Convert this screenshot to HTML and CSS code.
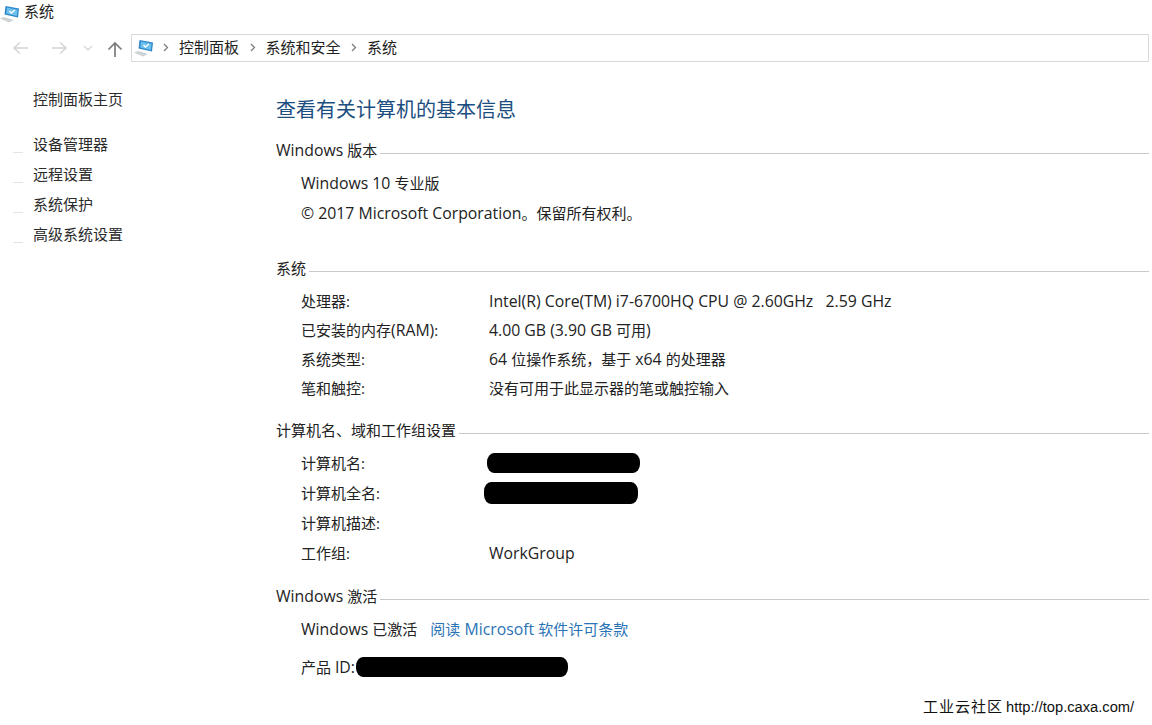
FILE: index.html
```html
<!DOCTYPE html>
<html lang="zh-CN">
<head>
<meta charset="utf-8">
<title>系统</title>
<link rel="stylesheet" href="styles.css">
</head>
<body>
<div class="window">
  <svg width="0" height="0" class="defs">
    <defs>
      <symbol id="pc" viewBox="0 0 20 18">
        <path d="M0 13.500 L4 12 L14 15 L9 17.500 Z" fill="#cfd2d4"/>
        <path d="M5.500 1 L19 3.500 L18 12.500 L4.500 9.500 Z" fill="#2f86c9"/>
        <path d="M7 2.600 L17.600 4.700 L16.800 11 L6.200 8.600 Z" fill="#6cc0ee"/>
        <path d="M9.500 6 L11.300 8 L15 5" fill="none" stroke="#fff" stroke-width="1.300"/>
      </symbol>
    </defs>
  </svg>
  <header class="titlebar">
    <svg class="title-icon"><use href="#pc"/></svg>
    <span>系统</span>
  </header>
  <nav class="navbar">
    <div class="nav-buttons">
      <svg class="nav-back" width="18" height="14" viewBox="0 0 18 14"><path d="M16 7H2M8 1.500 2 7l6 5.500" fill="none" stroke="#d4d4d4" stroke-width="1.500"/></svg>
      <svg class="nav-forward" width="18" height="14" viewBox="0 0 18 14"><path d="M2 7h14M10 1.500 16 7l-6 5.500" fill="none" stroke="#d4d4d4" stroke-width="1.500"/></svg>
      <svg class="nav-down" width="10" height="6" viewBox="0 0 10 6"><path d="M1 1l4 4 4-4" fill="none" stroke="#d4d4d4" stroke-width="1.200"/></svg>
      <svg class="nav-up" width="16" height="16" viewBox="0 0 16 16"><path d="M8 16V2M1.500 8.500 8 2l6.500 6.500" fill="none" stroke="#7b7b7b" stroke-width="1.700"/></svg>
    </div>
    <div class="address">
      <svg class="address-icon"><use href="#pc"/></svg>
      <svg class="crumb-sep" width="6" height="9" viewBox="0 0 6 9"><path d="M1 1l3.500 3.500L1 8" fill="none" stroke="#777" stroke-width="1.200"/></svg>
      <span>控制面板</span>
      <svg class="crumb-sep" width="6" height="9" viewBox="0 0 6 9"><path d="M1 1l3.500 3.500L1 8" fill="none" stroke="#777" stroke-width="1.200"/></svg>
      <span>系统和安全</span>
      <svg class="crumb-sep" width="6" height="9" viewBox="0 0 6 9"><path d="M1 1l3.500 3.500L1 8" fill="none" stroke="#777" stroke-width="1.200"/></svg>
      <span>系统</span>
    </div>
  </nav>
  <div class="main">
    <aside class="sidebar">
      <div class="side-home">控制面板主页</div>
      <ul class="side-links">
        <li>设备管理器</li>
        <li>远程设置</li>
        <li>系统保护</li>
        <li>高级系统设置</li>
      </ul>
    </aside>
    <main class="content">
      <h1 class="page-title">查看有关计算机的基本信息</h1>

      <section class="sec sec-edition">
        <h2 class="sec-head"><span><span class="la">Windows </span>版本</span></h2>
        <div class="plain-rows">
          <div><span class="la">Windows 10 </span>专业版</div>
          <div><span class="la">© 2017 Microsoft Corporation</span>。保留所有权利。</div>
        </div>
      </section>

      <section class="sec sec-system">
        <h2 class="sec-head"><span>系统</span></h2>
        <dl class="rows rows-tight">
          <dt>处理器:</dt><dd><span class="la">Intel(R) Core(TM) i7-6700HQ CPU @ 2.60GHz&nbsp;&nbsp; 2.59 GHz</span></dd>
          <dt>已安装的内存<span class="la">(RAM)</span>:</dt><dd><span class="la">4.00 GB (3.90 GB </span>可用<span class="la">)</span></dd>
          <dt>系统类型:</dt><dd><span class="la">64 </span>位操作系统，基于<span class="la"> x64 </span>的处理器</dd>
          <dt>笔和触控:</dt><dd>没有可用于此显示器的笔或触控输入</dd>
        </dl>
      </section>

      <section class="sec sec-computer">
        <h2 class="sec-head"><span>计算机名、域和工作组设置</span></h2>
        <dl class="rows">
          <dt>计算机名:</dt><dd><span class="redact redact-name"></span></dd>
          <dt>计算机全名:</dt><dd><span class="redact redact-full"></span></dd>
          <dt>计算机描述:</dt><dd></dd>
          <dt>工作组:</dt><dd><span class="la">WorkGroup</span></dd>
        </dl>
      </section>

      <section class="sec sec-activation">
        <h2 class="sec-head"><span><span class="la">Windows </span>激活</span></h2>
        <div class="activated"><span class="la">Windows </span>已激活<a class="license">阅读<span class="la"> Microsoft </span>软件许可条款</a></div>
        <div class="product">产品&nbsp;<span class="la">ID:</span><span class="redact redact-id"></span></div>
      </section>
    </main>
  </div>
  <div class="watermark"><span class="wm-cn">工业云社区</span><span class="wm-url">http://top.caxa.com/</span></div>
</div>
</body>
</html>
```

FILE: styles.css
```css
* { box-sizing: border-box; }
html, body { margin: 0; padding: 0; background: #fff; }
body {
  font-family: "Open Sans", "Noto Sans CJK SC", sans-serif;
  font-size: 15px;
  color: #222;
  overflow: hidden;
}
.la { font-size: 15.8px; }
.window { position: relative; width: 1152px; height: 725px; padding-right: 3px; }
.defs { position: absolute; }

.titlebar {
  height: 26px;
  display: flex;
  align-items: center;
  gap: 4px;
  font-size: 15px;
  padding-bottom: 5px;
}
.title-icon { width: 20px; height: 18px; margin-top: 6px; }

.navbar { display: flex; height: 28px; margin-top: 8px; align-items: center; }
.nav-buttons { width: 131px; display: flex; align-items: center; flex: none; }
.nav-back { margin-left: 12px; }
.nav-forward { margin-left: 20px; }
.nav-down { margin-left: 15px; }
.nav-up { margin-left: 14px; margin-top: 2px; }

.address {
  flex: 1;
  height: 28px;
  border: 1px solid #d9d9d9;
  display: flex;
  align-items: center;
  font-size: 15px;
  padding: 0 0 4px 2px;
  color: #1e1e1e;
}
.address-icon { width: 20px; height: 18px; margin-top: 4px; }
.crumb-sep { margin: 2px 10px 0 10.5px; }
.address-icon + .crumb-sep { margin-left: 9px; }

.main { display: flex; }
.sidebar { width: 276px; flex: none; padding: 25px 0 0 33px; color: #2b2b2b; }
.side-home { line-height: 24px; }
.side-links { list-style: none; margin: 21px 0 0; padding: 0; }
.side-links li { height: 30px; line-height: 24px; position: relative; }
.side-links li::before {
  content: "";
  position: absolute;
  left: -20px;
  top: 20px;
  width: 10px;
  height: 1px;
  background: #e4e4e4;
}

.content { flex: 1; min-width: 0; }
.page-title {
  margin: 33px 0 0;
  font-size: 20px;
  font-weight: 400;
  line-height: 30px;
  color: #1c4e80;
}
.sec-head {
  display: flex;
  align-items: center;
  margin: 0;
  font-size: 15px;
  font-weight: 400;
  line-height: 22px;
  color: #222;
}
.sec-head::after {
  content: "";
  flex: 1;
  height: 1px;
  margin: 7px 0 0 3px;
  background: #c9c9c9;
}
.sec-edition { margin-top: 14px; }
.sec-system { margin-top: 26px; }
.sec-computer { margin-top: 14px; }
.sec-activation { margin-top: 14px; }

.plain-rows { padding: 10px 0 0 25px; }
.plain-rows div { height: 30px; line-height: 24px; }

.rows {
  display: grid;
  grid-template-columns: 188px 1fr;
  margin: 0;
  padding: 10px 0 0 25px;
  grid-auto-rows: 30px;
  line-height: 24px;
}
.rows-tight { grid-auto-rows: 29px; }
.rows dt, .rows dd { margin: 0; }

.redact {
  display: block;
  background: #000;
  border-radius: 7px / 9px;
}
.redact-name { width: 153px; height: 20px; margin: 2px 0 0 -2px; }
.redact-full { width: 154px; height: 22px; margin: 1px 0 0 -5px; }

.activated { padding: 10px 0 0 25px; line-height: 24px; }
.license { margin-left: 13px; color: #2a73b5; }
.product { display: flex; align-items: center; padding: 14px 0 0 25px; line-height: 24px; }
.redact-id { width: 212px; height: 20px; margin-left: 1px; }

.watermark {
  position: absolute;
  left: 923px;
  top: 696px;
  display: flex;
  gap: 3px;
  font-family: "Liberation Sans", "Noto Sans CJK SC", sans-serif;
  font-size: 14.7px;
  line-height: 22px;
  color: #111;
  white-space: nowrap;
}
.wm-cn { font-size: 15px; letter-spacing: 1px; }
```
